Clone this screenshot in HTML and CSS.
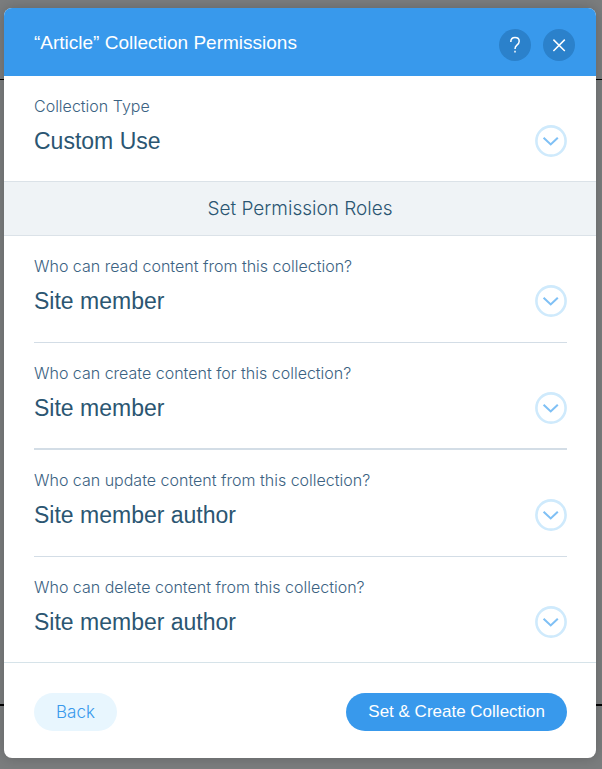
FILE: index.html
```html
<!DOCTYPE html>
<html lang="en">
<head>
<meta charset="utf-8">
<meta name="viewport" content="width=device-width, initial-scale=1">
<title>Collection Permissions</title>
<link rel="stylesheet" href="styles.css">
</head>
<body>
<svg class="sprite" aria-hidden="true">
  <symbol id="chevron" viewBox="0 0 32 32">
    <circle cx="16" cy="16" r="14.6" fill="none" stroke="#cfeafc" stroke-width="2.6"/>
    <path d="M8.6 12.8 L15.7 19.4 L22.8 12.8" fill="none" stroke="#7fc0f5" stroke-width="2.1"/>
  </symbol>
</svg>
<main class="backdrop">
  <form class="dialog" role="dialog" aria-labelledby="title">
    <header class="header">
      <h1 class="title" id="title">“Article” Collection Permissions</h1>
      <button class="round" type="button" aria-label="Help">
        <svg viewBox="0 0 32 32"><path d="M11.8 13 C11.8 10 13.4 8.6 16 8.6 C18.6 8.6 20.2 10 20.2 12.2 C20.2 14.1 19.3 15 17.9 16.1 C16.5 17.2 16 18 16 20" /><path d="M16 21.8 V23.6"/></svg>
      </button>
      <button class="round" type="button" aria-label="Close">
        <svg viewBox="0 0 32 32"><path d="M10.4 10.6 L21.8 22 M21.8 10.6 L10.4 22"/></svg>
      </button>
    </header>
    <section class="type field">
      <label class="label" for="type">Collection Type</label>
      <div class="control">
        <select class="select" id="type"><option>Custom Use</option></select>
        <svg class="chevron"><use href="#chevron"/></svg>
      </div>
    </section>
    <h2 class="band">Set Permission Roles</h2>
    <section class="roles">
      <div class="field role">
        <label class="label" for="read">Who can read content from this collection?</label>
        <div class="control">
          <select class="select" id="read"><option>Site member</option></select>
          <svg class="chevron"><use href="#chevron"/></svg>
        </div>
      </div>
      <div class="field role role-strong">
        <label class="label" for="create">Who can create content for this collection?</label>
        <div class="control">
          <select class="select" id="create"><option>Site member</option></select>
          <svg class="chevron"><use href="#chevron"/></svg>
        </div>
      </div>
      <div class="field role">
        <label class="label" for="update">Who can update content from this collection?</label>
        <div class="control">
          <select class="select" id="update"><option>Site member author</option></select>
          <svg class="chevron"><use href="#chevron"/></svg>
        </div>
      </div>
      <div class="field role">
        <label class="label" for="delete">Who can delete content from this collection?</label>
        <div class="control">
          <select class="select" id="delete"><option>Site member author</option></select>
          <svg class="chevron"><use href="#chevron"/></svg>
        </div>
      </div>
    </section>
    <footer class="footer">
      <button class="button secondary" type="button">Back</button>
      <button class="button primary" type="submit">Set &amp; Create Collection</button>
    </footer>
  </form>
</main>
</body>
</html>
```

FILE: styles.css
```css
* {
  box-sizing: border-box;
}

body {
  margin: 0;
  font-family: "Liberation Sans", Arial, sans-serif;
  color: #2b5672;
}

button,
select {
  font: inherit;
  border: 0;
  cursor: pointer;
}

.sprite {
  display: none;
}

/* Dimmed page with two rules showing behind the dialog */
.backdrop {
  display: flex;
  min-height: 100vh;
  padding: 8px 6px 11px 4px;
  background:
    linear-gradient(#000, #000) 0 79px / 100% 1px no-repeat,
    linear-gradient(#000, #000) 0 704px / 100% 2px no-repeat,
    #7b7d7e;
}

.dialog {
  display: flex;
  flex-direction: column;
  flex: 1;
  overflow: hidden;
  background: #fff;
  border-radius: 8px;
  box-shadow: 0 0 14px rgba(0, 0, 0, 0.2);
}

.header {
  display: flex;
  align-items: center;
  gap: 12px;
  height: 68px;
  padding: 6px 21px 0 30px;
  background: #3899ec;
  color: #fff;
}

.title {
  flex: 1;
  margin: 0;
  padding-bottom: 4px;
  font-size: 19px;
  font-weight: 400;
  line-height: 24px;
}

.round {
  width: 32px;
  height: 32px;
  padding: 0;
  border-radius: 50%;
  background: #2b81cb;
}

.round svg {
  display: block;
  width: 32px;
  height: 32px;
  fill: none;
  stroke: #fff;
  stroke-width: 1.5;
}

.field {
  display: flex;
  flex-direction: column;
  gap: 9px;
  padding-top: 20px;
}

.type {
  height: 105px;
  padding-left: 30px;
  padding-right: 29px;
}

.label {
  font-family: Inter, "Liberation Sans", sans-serif;
  font-size: 16px;
  font-weight: 300;
  line-height: 20px;
  color: #3b6282;
}

.control {
  display: grid;
  align-items: center;
}

.select {
  grid-area: 1 / 1;
  width: 100%;
  height: 32px;
  padding: 0 48px 0 0;
  appearance: none;
  background: transparent;
  color: #2b5672;
  font-size: 23px;
  line-height: 32px;
}

.chevron {
  grid-area: 1 / 1;
  justify-self: end;
  width: 32px;
  height: 32px;
  pointer-events: none;
}

.band {
  margin: 0;
  border: solid #dbe2e8;
  border-width: 1px 0;
  background: #eff3f6;
  font-family: Inter, "Liberation Sans", sans-serif;
  font-size: 19px;
  font-weight: 300;
  line-height: 53px;
  text-align: center;
}

.roles {
  display: flex;
  flex-direction: column;
  flex: 1;
  padding: 0 29px 0 30px;
}

.role {
  flex: 1;
  border-bottom: 1px solid #d3dde6;
}

.role-strong {
  border-bottom-width: 2px;
}

.role:last-child {
  border-bottom: 0;
}

.footer {
  display: flex;
  align-items: center;
  justify-content: space-between;
  height: 96px;
  padding: 2px 29px 0 30px;
  border-top: 1px solid #d6e3e9;
}

.button {
  height: 38px;
  padding: 0 22px;
  border-radius: 19px;
  font-size: 17px;
  line-height: 38px;
}

.secondary {
  background: #e8f6fe;
  color: #3899ec;
  font-family: Inter, "Liberation Sans", sans-serif;
  font-weight: 300;
}

.primary {
  background: #3899ec;
  color: #fff;
}
```
